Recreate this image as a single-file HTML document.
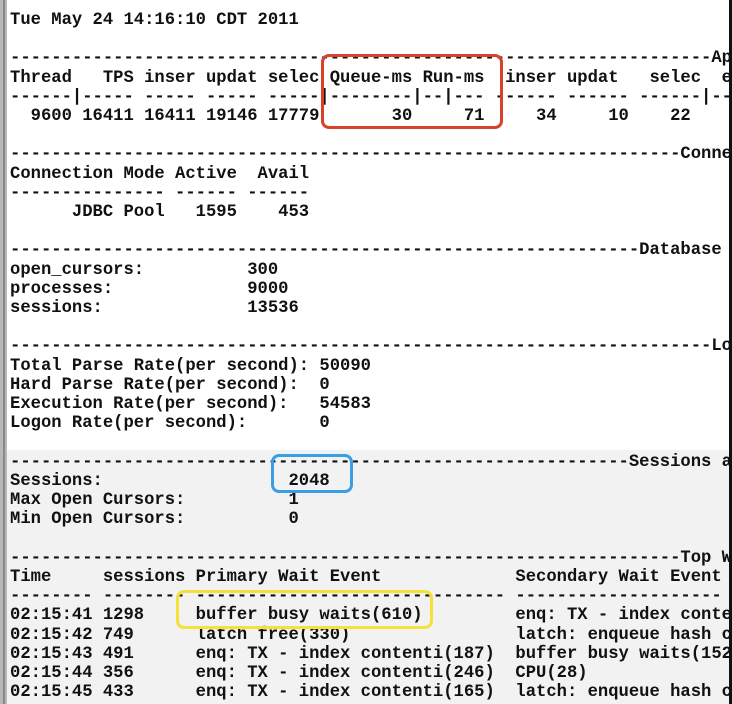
<!DOCTYPE html>
<html><head><meta charset="utf-8"><style>
html,body{margin:0;padding:0;width:732px;height:704px;overflow:hidden;background:#fff;}
#lb{position:absolute;left:0;top:0;width:7px;height:704px;background:#b8b8b8;}
#lb2{position:absolute;left:3px;top:0;width:2px;height:704px;background:#888;}
#rb{position:absolute;right:0;top:0;width:3px;height:704px;background:#111;}
#gray{position:absolute;left:7px;top:450px;width:722px;height:254px;background:#f2f2f2;}
#t{position:absolute;left:10px;top:11px;width:719px;overflow:hidden;margin:0;font-family:"Liberation Mono",monospace;font-weight:bold;font-size:17.2px;line-height:19.2px;color:#111;white-space:pre;letter-spacing:0;}
.box{position:absolute;border-style:solid;border-width:3px;border-radius:8px;}
</style></head><body>
<div id="gray"></div>
<div id="lb"></div><div id="lb2"></div>
<pre id="t">Tue May 24 14:16:10 CDT 2011

--------------------------------------------------------------------Ap
Thread   TPS inser updat selec Queue-ms Run-ms  inser updat   selec  e
------|----- ----- ----- -----|--------|--|--- ------ ------ ------|--
  9600 16411 16411 19146 17779       30     71     34     10    22

-----------------------------------------------------------------Conne
Connection Mode Active  Avail
--------------- ------ ------
      JDBC Pool   1595    453

-------------------------------------------------------------Database
open_cursors:          300
processes:             9000
sessions:              13536

--------------------------------------------------------------------Lo
Total Parse Rate(per second): 50090
Hard Parse Rate(per second):  0
Execution Rate(per second):   54583
Logon Rate(per second):       0

------------------------------------------------------------Sessions a
Sessions:                  2048
Max Open Cursors:          1
Min Open Cursors:          0

-----------------------------------------------------------------Top W
Time     sessions Primary Wait Event             Secondary Wait Event
-------- -------- ------------------------------ --------------------
02:15:41 1298     buffer busy waits(610)         enq: TX - index conte
02:15:42 749      latch free(330)                latch: enqueue hash c
02:15:43 491      enq: TX - index contenti(187)  buffer busy waits(152
02:15:44 356      enq: TX - index contenti(246)  CPU(28)
02:15:45 433      enq: TX - index contenti(165)  latch: enqueue hash c</pre>
<div class="box" style="left:321px;top:54px;width:176px;height:69px;border-color:#d8412c;"></div>
<div class="box" style="left:271px;top:454px;width:76px;height:33px;border-color:#3a9ee4;"></div>
<div class="box" style="left:176px;top:590px;width:251px;height:33px;border-color:#f2e23a;"></div>
<div id="rb"></div>
</body></html>
